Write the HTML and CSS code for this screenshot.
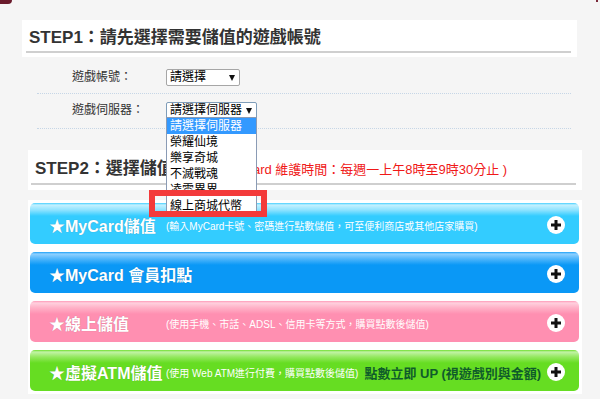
FILE: index.html
```html
<!DOCTYPE html>
<html lang="zh-Hant">
<head>
    <meta charset="UTF-8">
    <title>儲值</title>
    <link rel="stylesheet" href="styles.css">
</head>
<body>
    <div class="logo-bit"></div>
    <div class="corner-bit"></div>
    <div class="page">
        <div class="step step1">
            <h2>STEP1：請先選擇需要儲值的遊戲帳號</h2>
        </div>
        <div class="form">
            <div class="row row1">
                <span class="label">遊戲帳號：</span>
                <div class="select s1">請選擇<span class="arrow"></span></div>
            </div>
            <div class="row row2">
                <span class="label">遊戲伺服器：</span>
                <div class="select-wrap">
                    <div class="select s2">請選擇伺服器<span class="arrow"></span></div>
                    <ul class="dropdown">
                        <li class="active">請選擇伺服器</li>
                        <li>榮耀仙境</li>
                        <li>樂享奇城</li>
                        <li>不滅戰魂</li>
                        <li>凌雲異界</li>
                        <li>線上商城代幣</li>
                    </ul>
                    <div class="mark"></div>
                </div>
            </div>
        </div>
        <div class="step step2">
            <h2>STEP2：選擇儲值方式<span class="note">(MyCard 維護時間：每週一上午8時至9時30分止 )</span></h2>
        </div>
        <div class="bars">
            <div class="bar cyan">
                <span class="title">★MyCard儲值</span>
                <span class="desc">(輸入MyCard卡號、密碼進行點數儲值，可至便利商店或其他店家購買)</span>
                <svg class="plus" viewBox="0 0 18 18"><circle cx="9" cy="9" r="9" fill="#fff"/><path d="M9 4v10M4 9h10" stroke="#111" stroke-width="3"/></svg>
            </div>
            <div class="bar blue">
                <span class="title">★MyCard 會員扣點</span>
                <svg class="plus" viewBox="0 0 18 18"><circle cx="9" cy="9" r="9" fill="#fff"/><path d="M9 4v10M4 9h10" stroke="#111" stroke-width="3"/></svg>
            </div>
            <div class="bar pink">
                <span class="title">★線上儲值</span>
                <span class="desc">(使用手機、市話、ADSL、信用卡等方式，購買點數後儲值)</span>
                <svg class="plus" viewBox="0 0 18 18"><circle cx="9" cy="9" r="9" fill="#fff"/><path d="M9 4v10M4 9h10" stroke="#111" stroke-width="3"/></svg>
            </div>
            <div class="bar green">
                <span class="title">★虛擬ATM儲值</span>
                <span class="desc">(使用 Web ATM進行付費，購買點數後儲值)</span>
                <span class="up">點數立即 UP (視遊戲別與金額)</span>
                <svg class="plus" viewBox="0 0 18 18"><circle cx="9" cy="9" r="9" fill="#fff"/><path d="M9 4v10M4 9h10" stroke="#111" stroke-width="3"/></svg>
            </div>
        </div>
    </div>
</body>
</html>
```

FILE: styles.css
```css
body {
    margin: 0;
    background-color: #f5f5f5;
    font-family: "Liberation Sans", "Noto Sans CJK TC", sans-serif;
    color: #333;
}

.logo-bit {
    position: absolute;
    left: 0;
    top: 0;
    width: 12px;
    height: 4px;
    background-color: #6a1b2c;
    border-radius: 0 0 6px 0;
}

.corner-bit {
    position: absolute;
    right: 2px;
    top: 0;
    width: 2px;
    height: 2px;
    background-color: #7a2a3a;
}

.page {
    padding: 20px 0 0 22px;
}

.step {
    background-color: #fff;
    box-sizing: border-box;
}

.step h2 {
    margin: 0;
    font-size: 17px;
    line-height: 20px;
    font-weight: bold;
    color: #333;
    white-space: nowrap;
    border-bottom: 2px solid #cfcfcf;
}

.step1 {
    width: 555px;
    padding: 8px 6px 4px 4px;
}

.step1 h2 {
    padding: 0 0 3px 3px;
}

.row {
    display: flex;
    align-items: center;
    margin-left: 15px;
    width: 534px;
    border-bottom: 1px dotted #c6d6e6;
}

.row1 {
    padding: 12px 0 7px;
}

.row2 {
    padding: 8px 0 9px;
}

.label {
    width: 94px;
    padding-left: 35px;
    font-size: 12px;
    line-height: 17px;
    color: #333;
}

.select {
    display: flex;
    justify-content: space-between;
    align-items: center;
    height: 17px;
    box-sizing: border-box;
    padding: 0 4px 0 3px;
    border: 1px solid #a6a6a6;
    border-radius: 2px;
    background-color: #fff;
    font-size: 12px;
    line-height: 15px;
    color: #000;
    white-space: nowrap;
}

.s1 {
    width: 74px;
}

.s2 {
    width: 91px;
    border-color: #7f9db9;
}

.arrow {
    flex-shrink: 0;
    width: 0;
    height: 0;
    border-left: 3px solid transparent;
    border-right: 3px solid transparent;
    border-top: 6px solid #111;
}

.select-wrap {
    position: relative;
}

.dropdown {
    position: absolute;
    left: 0;
    top: 15px;
    width: 91px;
    box-sizing: border-box;
    margin: 0;
    padding: 0;
    list-style: none;
    border: 1px solid #8a9bb5;
    background-color: #fff;
    font-size: 12px;
    z-index: 2;
}

.dropdown li {
    height: 16px;
    line-height: 16px;
    padding-left: 3px;
    white-space: nowrap;
    overflow: hidden;
    color: #000;
}

.dropdown li.active {
    background-color: #3399ff;
    color: #fff;
}

.mark {
    position: absolute;
    left: -17px;
    top: 88px;
    width: 118px;
    height: 27px;
    box-sizing: border-box;
    border: 6px solid #f33a3a;
    z-index: 3;
}

.step2 {
    margin: 21px 0 0 6px;
    width: 554px;
    padding: 9px 6px 5px 3px;
}

.step2 h2 {
    padding: 0 0 3px 4px;
}

.note {
    margin-left: 14px;
    font-size: 13px;
    font-weight: normal;
    color: #f01818;
}

.bars {
    display: flex;
    flex-direction: column;
    gap: 8px;
    margin: 10px 0 0 6px;
    width: 554px;
    box-sizing: border-box;
    padding: 3px 3px 3px 2px;
    background-color: #fff;
}

.bar {
    display: flex;
    align-items: center;
    height: 41px;
    box-sizing: border-box;
    padding: 3px 14px 0 19px;
    border-radius: 5px;
    color: #fff;
}

.bar .title {
    width: 117px;
    flex-shrink: 0;
    font-size: 16px;
    font-weight: bold;
    white-space: nowrap;
    text-shadow: 0 0 1px rgba(0, 0, 0, 0.25);
}

.bar .desc {
    font-size: 10px;
    white-space: nowrap;
}

.bar .up {
    margin-left: 6px;
    font-size: 13px;
    font-weight: bold;
    color: #0f5c2a;
    white-space: nowrap;
}

.bar .plus {
    margin-left: auto;
    flex-shrink: 0;
    width: 18px;
    height: 18px;
}

.cyan {
    background: linear-gradient(#45cfff 0, #c4f1ff 2px, #8fe3ff 7px, #33ccff 13px);
}

.blue {
    background: linear-gradient(#1aa0f8 0, #8fd0ff 2px, #4db5fb 7px, #0a98f6 13px);
}

.pink {
    background: linear-gradient(#ff9ab8 0, #ffd0de 2px, #ffb0c6 7px, #ff8fb1 13px);
}

.green {
    background: linear-gradient(#6fdf2e 0, #c2f3a6 2px, #94e85f 7px, #66dd22 13px);
}
```
